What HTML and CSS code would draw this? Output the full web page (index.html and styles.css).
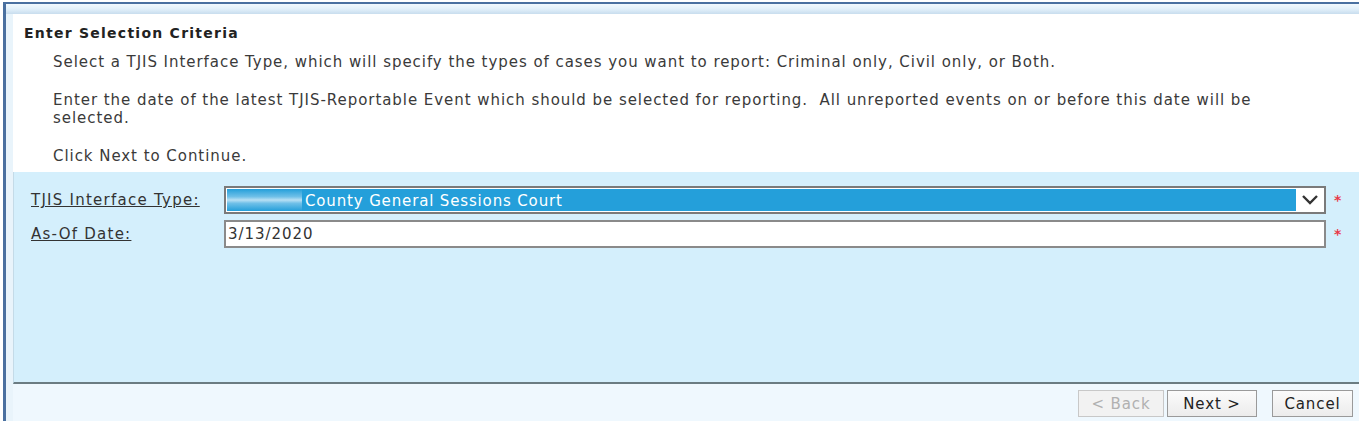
FILE: index.html
```html
<!DOCTYPE html>
<html>
<head>
<meta charset="utf-8">
<link rel="stylesheet" href="styles.css">
</head>
<body>
<div class="window">
  <div class="topband"></div>
  <div class="inner">
    <div class="intro">
      <div class="title">Enter Selection Criteria</div>
      <p class="para first">Select a TJIS Interface Type, which will specify the types of cases you want to report: Criminal only, Civil only, or Both.</p>
      <p class="para">Enter the date of the latest TJIS-Reportable Event which should be selected for reporting.&nbsp; All unreported events on or before this date will be selected.</p>
      <p class="para">Click Next to Continue.</p>
    </div>
    <div class="form">
      <div class="row">
        <label class="label">TJIS Interface Type:</label>
        <div class="select">
          <div class="sel-value"><span class="blur"></span><span class="sel-text">County General Sessions Court</span></div>
          <div class="sel-arrow"><svg width="18" height="12" viewBox="0 0 18 12"><path d="M2 2 L9 9 L16 2" fill="none" stroke="#333" stroke-width="2.4"/></svg></div>
        </div>
        <span class="req">*</span>
      </div>
      <div class="row">
        <label class="label">As-Of Date:</label>
        <div class="input">3/13/2020</div>
        <span class="req">*</span>
      </div>
    </div>
    <div class="footer">
      <button class="btn back" disabled>&lt; Back</button>
      <button class="btn next">Next &gt;</button>
      <button class="btn cancel">Cancel</button>
    </div>
  </div>
</div>
</body>
</html>
```
FILE: styles.css
```css
html, body { margin: 0; padding: 0; background: #fff; }
body {
  font-family: "DejaVu Sans", Verdana, sans-serif;
  font-size: 15px;
  letter-spacing: 0.95px;
  color: #333;
  width: 1359px;
  height: 421px;
  overflow: hidden;
}
.window {
  margin: 2px 0 0 3px;
  border-top: 2px solid #4a70a0;
  border-left: 3px solid #4a70a0;
  height: 417px;
  display: flex;
  flex-direction: column;
}
.topband {
  height: 10px;
  background: linear-gradient(#f2f9fe, #e2f0fa 50%, #c8ddee);
  flex: none;
}
.inner {
  flex: 1;
  display: flex;
  flex-direction: column;
  padding-left: 7px;
  background: #e9f4fb;
}
.intro {
  background: #fff;
  padding: 10px 0 7px 11px;
  flex: none;
}
.title {
  font-weight: bold;
  font-size: 14px;
  letter-spacing: 1.25px;
  color: #222;
  line-height: 18px;
}
.para {
  margin: 20px 0 0 29px;
  line-height: 18px;
  width: 1215px;
  color: #3a3a3a;
}
.para.first { margin-top: 11px; }
.form {
  background: #d4effc;
  height: 212px;
  flex: none;
  padding-top: 14px;
  box-sizing: border-box;
  border-left: 1px solid #c4dbe8;
  border-bottom: 2px solid #6b7c82;
  display: flex;
  flex-direction: column;
  gap: 6px;
}
.row {
  display: flex;
  align-items: center;
  height: 28px;
}
.label {
  width: 193px;
  padding-left: 17px;
  text-decoration: underline;
  color: #333;
  flex: none;
  letter-spacing: 1.25px;
}
.select, .input {
  width: 1102px;
  height: 28px;
  box-sizing: border-box;
  border: 2px solid #7a7a7a;
  background: #fff;
  display: flex;
  align-items: stretch;
  flex: none;
}
.sel-value {
  flex: 1;
  background: #249fda;
  color: #fff;
  display: flex;
  align-items: center;
  margin: 1px 0 1px 1px;
  letter-spacing: 0.85px;
}
.blur {
  width: 75px;
  height: 100%;
  background: linear-gradient(#249fda, #6fc0e8 35%, #b8e0f4 50%, #6fc0e8 65%, #249fda);
  margin-right: 3px;
}
.sel-text { padding-top: 1px; }
.sel-arrow {
  width: 28px;
  display: flex;
  align-items: center;
  justify-content: center;
}
.input {
  align-items: center;
  padding-left: 2px;
  color: #333;
  border-color: #8a8a8a;
}
.req {
  color: #e83a4a;
  font-weight: bold;
  margin-left: 8px;
  font-size: 14px;
}
.footer {
  flex: 1;
  background: #eff8fe;
  display: flex;
  justify-content: flex-end;
  align-items: flex-start;
  padding: 6px 6px 0 0;
}
.btn {
  font-family: "DejaVu Sans", Verdana, sans-serif;
  font-size: 15px;
  letter-spacing: 0.9px;
  height: 27px;
  background: linear-gradient(#fbfbfb, #ececec);
  border: 1px solid #9a9a9a;
  color: #222;
  margin-left: 3px;
  padding: 0;
}
.btn.back { width: 86px; color: #b0b0b0; border-color: #c8c8c8; background: #f2f2f2; }
.btn.next { width: 90px; }
.btn.cancel { margin-left: 15px; width: 81px; }
```
